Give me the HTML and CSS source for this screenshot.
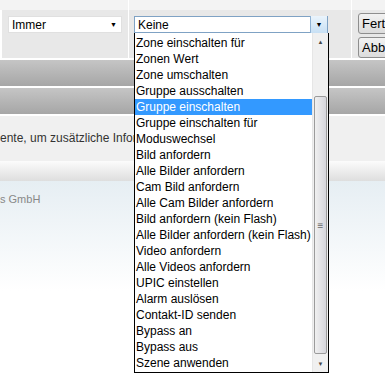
FILE: index.html
```html
<!DOCTYPE html>
<html lang="de">
<head>
    <meta charset="UTF-8">
    <title>Regel bearbeiten</title>
    <link rel="stylesheet" href="styles.css">
</head>
<body>
    <div class="page">
        <div class="top-strip">
            <div class="cell c1"></div>
            <div class="cell c2"></div>
            <div class="cell c3"></div>
        </div>

        <div class="filter-row">
            <div class="cell c1">
                <div class="select">
                    <span>Immer</span>
                    <span class="arrow">&#9660;</span>
                </div>
            </div>
            <div class="cell c2">
                <div class="select open">
                    <span>Keine</span>
                    <span class="arrow-btn">&#9660;</span>
                </div>
            </div>
            <div class="cell c3">
                <button class="btn">Fertig</button>
                <button class="btn">Abbrechen</button>
            </div>
        </div>

        <div class="bar"></div>
        <div class="bar"></div>

        <div class="hint">
            <p>ente, um zusätzliche Informationen anzuzeigen.</p>
        </div>

        <div class="footer-edge"></div>
        <div class="footer">
            <p>s GmbH</p>
        </div>
    </div>

    <!-- open dropdown list of the "Keine" select -->
    <div class="dropdown">
        <ul class="options">
            <li>Zone einschalten für</li>
            <li>Zonen Wert</li>
            <li>Zone umschalten</li>
            <li>Gruppe ausschalten</li>
            <li class="selected">Gruppe einschalten</li>
            <li>Gruppe einschalten für</li>
            <li>Moduswechsel</li>
            <li>Bild anfordern</li>
            <li>Alle Bilder anfordern</li>
            <li>Cam Bild anfordern</li>
            <li>Alle Cam Bilder anfordern</li>
            <li>Bild anfordern (kein Flash)</li>
            <li>Alle Bilder anfordern (kein Flash)</li>
            <li>Video anfordern</li>
            <li>Alle Videos anfordern</li>
            <li>UPIC einstellen</li>
            <li>Alarm auslösen</li>
            <li>Contakt-ID senden</li>
            <li>Bypass an</li>
            <li>Bypass aus</li>
            <li>Szene anwenden</li>
        </ul>
        <div class="scrollbar">
            <div class="sb-arrow">&#9650;</div>
            <div class="sb-track">
                <div class="sb-thumb"><span class="grip">&#8801;</span></div>
            </div>
            <div class="sb-arrow">&#9660;</div>
        </div>
    </div>
</body>
</html>
```

FILE: styles.css
```css
body {
    margin: 0;
    font-family: "Liberation Sans", Arial, sans-serif;
    overflow: hidden;
    background: #fff;
}
.page {
    width: 385px;
    overflow: hidden;
}
.cell {
    flex-shrink: 0;
    border-right: 1px solid #fff;
    box-sizing: border-box;
}
.c1 {
    width: 129px;
    padding-left: 8px;
}
.c2 {
    width: 223px;
    padding-left: 5px;
}
.c3 {
    flex: 0 0 80px;
    border-right: none;
    padding-left: 6px;
}
.top-strip {
    display: flex;
    height: 10px;
    background: #f3f3f3;
}
.filter-row {
    display: flex;
    height: 48px;
    background: #e8e8e8;
    border-left: 2px solid #fff;
    border-bottom: 2px solid #fff;
}
.filter-row .c1 {
    width: 127px;
    padding-left: 6px;
}
.select {
    margin-top: 6px;
    height: 17px;
    background: #fff;
    border: 1px solid #e0e0e0;
    display: flex;
    align-items: center;
    justify-content: space-between;
    font-size: 12px;
    color: #000;
    padding-left: 3px;
}
.c1 .select {
    width: 114px;
    box-sizing: border-box;
}
.arrow {
    font-size: 7px;
    margin-right: 4px;
}
.select.open {
    width: 194px;
    box-sizing: border-box;
    border-color: #7fa2c4;
    padding-right: 0;
}
.arrow-btn {
    width: 16px;
    height: 17px;
    border-left: 1px solid #8fb2d4;
    background: linear-gradient(#eaf4fc, #c8e0f4);
    font-size: 7px;
    display: flex;
    align-items: center;
    justify-content: center;
}
.btn {
    display: block;
    width: 60px;
    height: 21px;
    margin-top: 3px;
    padding: 0 3px;
    text-align: left;
    font-family: "Liberation Sans", Arial, sans-serif;
    font-size: 13px;
    color: #000;
    background: linear-gradient(#f2f2f2, #dcdcdc);
    border: 1px solid #8e8e8e;
    border-radius: 3px;
}
.c3 .btn:first-child {
    margin-top: 3px;
}
.bar {
    height: 26px;
    background: linear-gradient(#c5c5c5, #a6a6a6);
    border-bottom: 2px solid #fff;
}
.hint {
    height: 45px;
    background: #f0f0f0;
    overflow: hidden;
}
.hint p {
    margin: 15px 0 0;
    font-size: 12px;
    color: #333;
    white-space: nowrap;
}
.footer-edge {
    height: 20px;
    background: linear-gradient(#fcfcfc, #dedede);
}
.footer {
    height: 110px;
    background: linear-gradient(#e6eef3, #ffffff);
}
.footer p {
    margin: 0;
    padding-top: 12px;
    font-size: 11px;
    color: #888;
}
.dropdown {
    position: absolute;
    left: 134px;
    top: 33px;
    width: 195px;
    height: 340px;
    box-sizing: border-box;
    background: #fff;
    border: 1px solid #000;
    border-top: none;
    display: flex;
}
.options {
    list-style: none;
    margin: 0;
    padding: 2px 0 0;
    flex: 1;
    font-size: 12px;
    color: #000;
}
.options li {
    height: 16px;
    line-height: 16px;
    padding-left: 1px;
    white-space: nowrap;
}
.options li.selected {
    background: #3399ff;
    color: #fff;
}
.scrollbar {
    width: 15px;
    background: #f0f0f0;
    border-left: 1px solid #e6e6e6;
    display: flex;
    flex-direction: column;
}
.sb-arrow {
    height: 17px;
    font-size: 6px;
    color: #444;
    display: flex;
    align-items: center;
    justify-content: center;
}
.sb-track {
    flex: 1;
    padding-top: 46px;
    padding-bottom: 1px;
    display: flex;
}
.sb-thumb {
    flex: 1;
    margin: 0 1px;
    border: 1px solid #9b9b9b;
    border-radius: 2px;
    background: linear-gradient(90deg, #f0f0f0, #d6d6dc);
    display: flex;
    align-items: center;
    justify-content: center;
}
.grip {
    font-size: 10px;
    color: #666;
}
```
